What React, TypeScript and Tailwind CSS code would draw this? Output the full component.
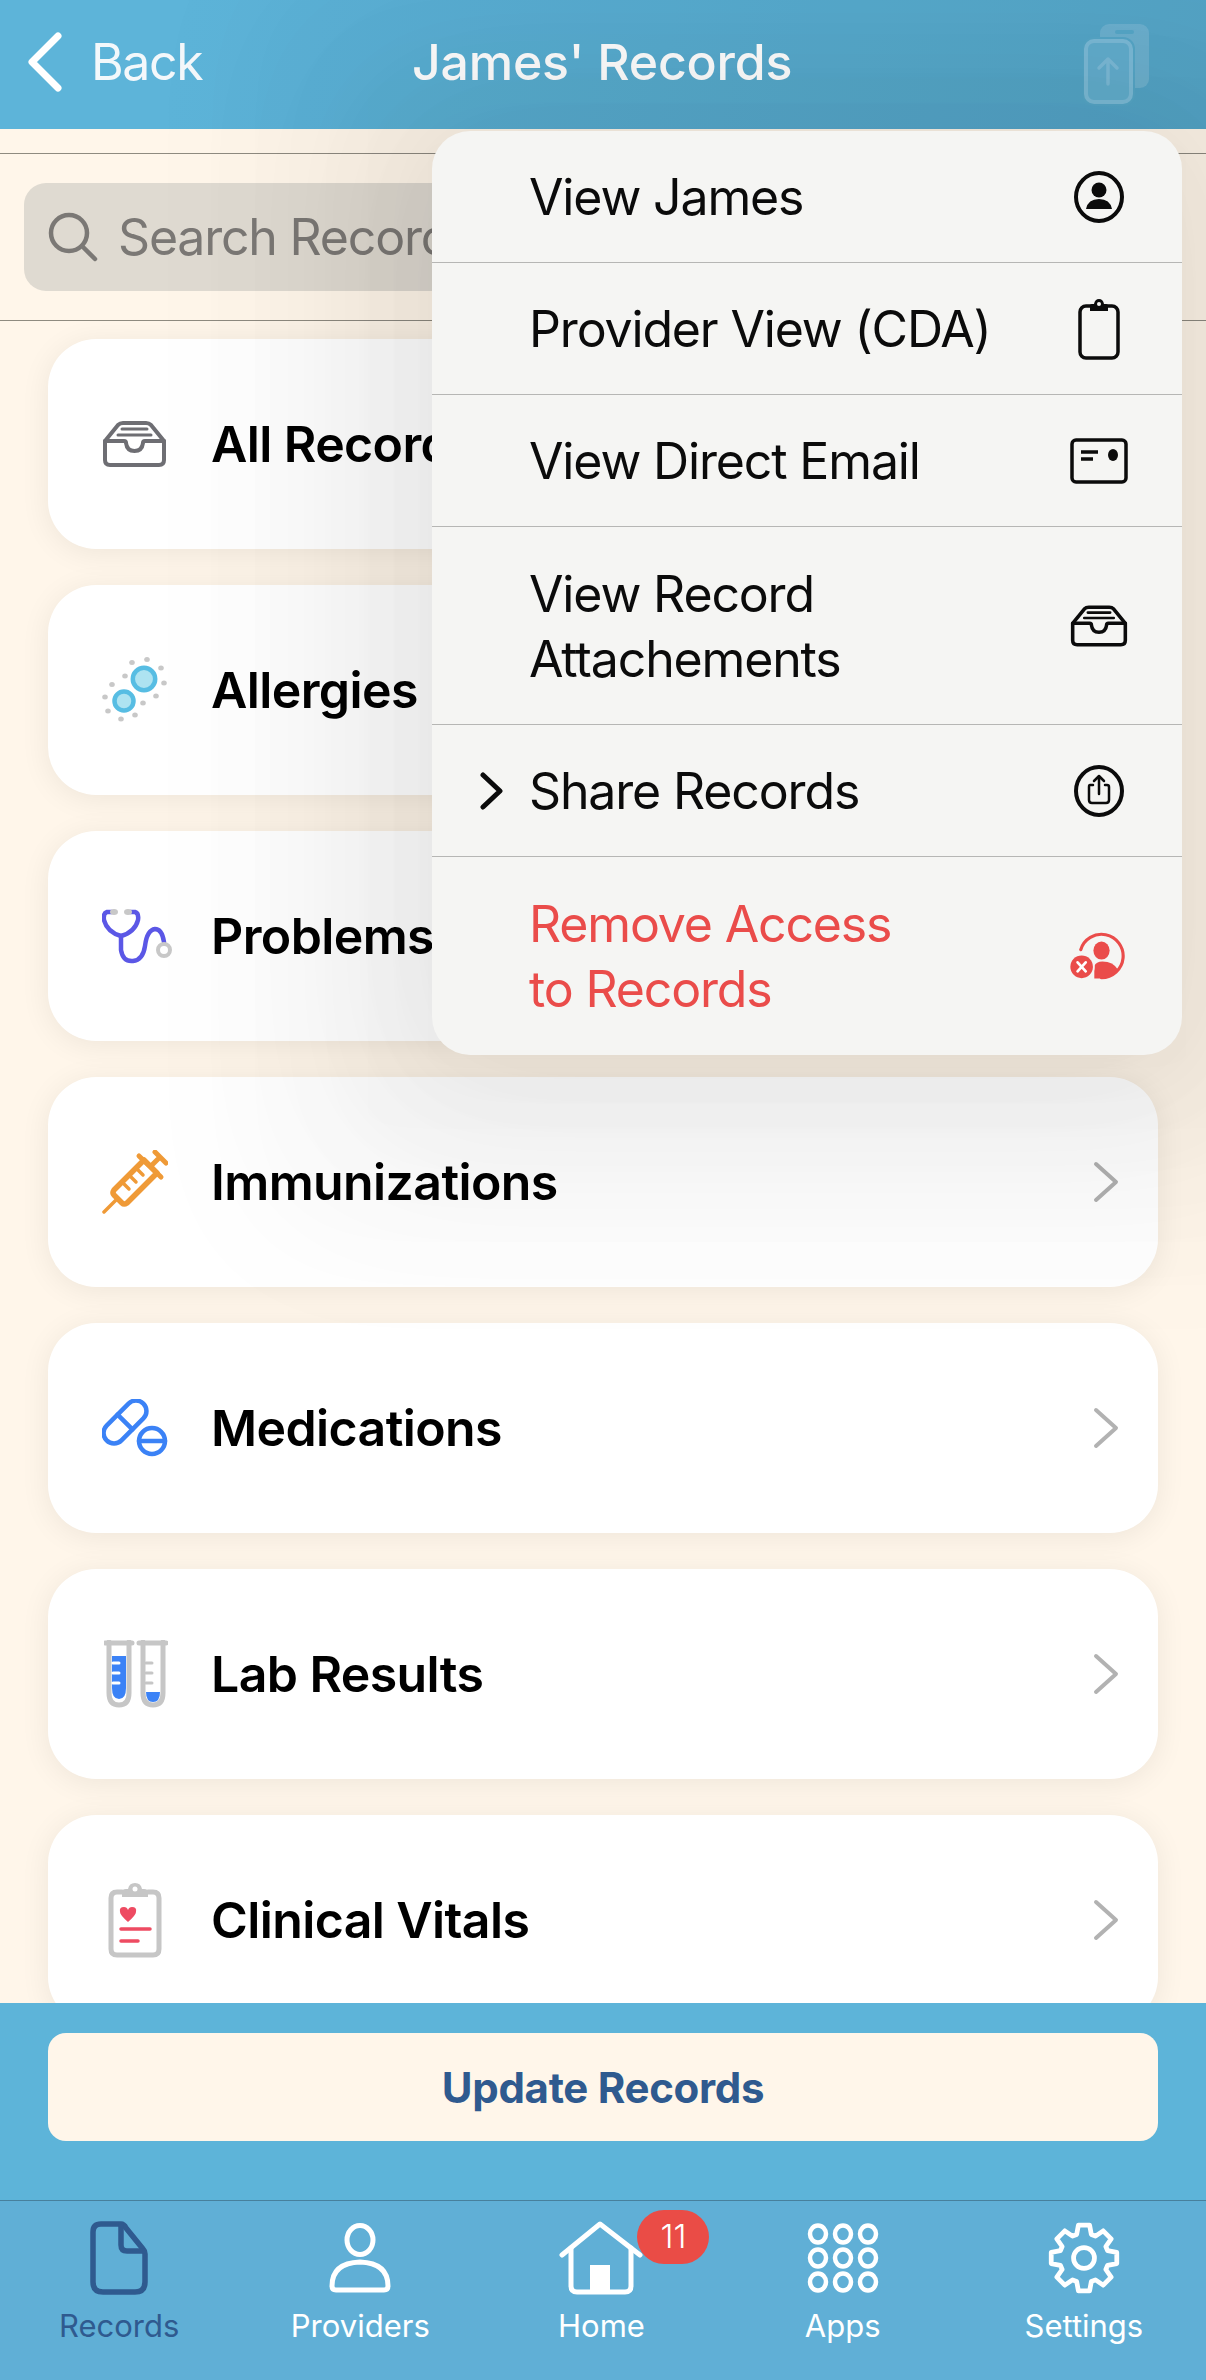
import React from "react";

const gearPath = (() => {
  const cx = 40, cy = 40, n = 8;
  const pts: string[] = [];
  for (let i = 0; i < n; i++) {
    const a = (i * 2 * Math.PI) / n - Math.PI / 2;
    const d = [[-0.30, 26], [-0.17, 35], [0.17, 35], [0.30, 26]];
    d.forEach(([o, r]) => {
      pts.push(`${(cx + r * Math.cos(a + o)).toFixed(1)},${(cy + r * Math.sin(a + o)).toFixed(1)}`);
    });
  }
  return pts;
})();

const Tray = ({ c, w = 65, h = 46 }: { c: string; w?: number; h?: number }) => (
  <svg width={w} height={h} viewBox="0 0 65 46" fill="none" stroke={c} strokeWidth="4" strokeLinejoin="round" strokeLinecap="round">
    <path d="M3 20 L16 4 Q18 2 21 2 H44 Q47 2 49 4 L62 20 V39 Q62 44 57 44 H8 Q3 44 3 39 Z" />
    <path d="M3 20 H22 Q24 20 24 22 Q25 30 32.5 30 Q40 30 41 22 Q41 20 43 20 H62" />
    <path d="M20 8 H45 M16 14 H49" strokeWidth="3" />
  </svg>
);

const ChevronGray = () => (
  <svg width="28" height="42" viewBox="0 0 28 42" fill="none" stroke="#b2b2b2" strokeWidth="4" strokeLinecap="round" strokeLinejoin="round">
    <path d="M4 3 L24 21 L4 39" />
  </svg>
);

const Allergy = () => (
  <svg width="66" height="66" viewBox="0 0 66 66">
    {[[30,5.6],[45,2.5],[59,11],[62,26],[54,39],[41,46],[23,19],[10,27.5],[3,40],[6,54],[19,62],[33,58]].map(([x, y], i) => (
      <ellipse key={i} cx={x} cy={y} rx="2.8" ry="2.5" fill="#c8c8c8" />
    ))}
    <circle cx="42" cy="22" r="11.2" fill="#aee3f1" stroke="#57bde3" strokeWidth="4.5" />
    <circle cx="22" cy="44" r="9.5" fill="#aee3f1" stroke="#57bde3" strokeWidth="4.5" />
  </svg>
);

const Stetho = () => (
  <svg width="70" height="56" viewBox="0 0 70 56" fill="none" strokeLinecap="round">
    <path d="M10 4 H5 Q1 5 2 12 Q5 24 19 28 Q33 24 36 12 Q37 5 33 4 H28" stroke="#5b57e6" strokeWidth="4.5" />
    <path d="M19 28 V42 Q21 54 31 53 Q41 52 43 38 Q45 22 53 21 Q60 21 62 34" stroke="#5b57e6" strokeWidth="4.5" />
    <ellipse cx="12" cy="4" rx="4" ry="3" fill="#c8c8c8" />
    <ellipse cx="26" cy="4" rx="4" ry="3" fill="#c8c8c8" />
    <circle cx="62" cy="42" r="6" fill="#fff" stroke="#c8c8c8" strokeWidth="4" />
  </svg>
);

const Syringe = () => (
  <svg width="66" height="64" viewBox="0 0 66 64" fill="none" stroke="#ef9a37" strokeLinecap="round" strokeLinejoin="round">
    <path d="M2 62 L14 50" strokeWidth="3.5" />
    <path d="M12 40 L42 10 L55 23 L25 53 Q22 55 20 53 L12 45 Q10 43 12 40 Z" strokeWidth="5.5" />
    <path d="M37 6 L59 27" strokeWidth="5" />
    <path d="M50 15 L58 7 M53 2 L64 13" strokeWidth="5" />
    <path d="M36 20 L41 25 M29 27 L34 32 M22 34 L27 39" strokeWidth="3.5" />
  </svg>
);

const Meds = () => (
  <svg width="66" height="58" viewBox="0 0 66 58" fill="none" stroke="#3b82f6" strokeWidth="4.5" strokeLinecap="round">
    <g transform="rotate(-45 23 23)">
      <rect x="-3" y="12.5" width="52" height="21" rx="10.5" />
      <path d="M23 12.5 V33.5" />
    </g>
    <circle cx="50" cy="42" r="13" fill="#fff" />
    <path d="M37 42 H63" />
  </svg>
);

const Lab = () => (
  <svg className="ml-[2px]" width="64" height="68" viewBox="0 0 64 68" fill="none" strokeLinecap="round">
    <path d="M8 16 H22 V48 Q22 59 15 59 Q8 59 8 48 Z" fill="#3b82f6" />
    <path d="M42 52 H56 Q56 62 49 62 Q42 62 42 52 Z" fill="#3b82f6" />
    <path d="M5 2 V53 Q5 65 15 65 Q25 65 25 53 V2" stroke="#c6c6c6" strokeWidth="5" />
    <path d="M39 2 V53 Q39 65 49 65 Q59 65 59 53 V2" stroke="#c6c6c6" strokeWidth="5" />
    <path d="M1 3 H28 M35 3 H62" stroke="#c6c6c6" strokeWidth="5" />
    <path d="M9 23 H15 M9 33 H15 M9 43 H15" stroke="#fff" strokeWidth="3" />
    <path d="M42 23 H48 M42 33 H48 M42 43 H48" stroke="#c6c6c6" strokeWidth="3" />
  </svg>
);

const Vitals = () => (
  <svg className="ml-[6px]" width="54" height="76" viewBox="0 0 54 76" fill="none" strokeLinecap="round">
    <path d="M14 10 H9 Q3 10 3 16 V67 Q3 73 9 73 H45 Q51 73 51 67 V16 Q51 10 45 10 H40" stroke="#c6c6c6" strokeWidth="5" />
    <path d="M14 15 V10 Q14 7 18 7 H20 Q21 1 27 1 Q33 1 34 7 H36 Q40 7 40 10 V15 Z" fill="#c6c6c6" />
    <circle cx="27" cy="7" r="2.5" fill="#fff" />
    <path d="M20 40 Q12 33 12 30 Q11 25 16 25 Q19 25 20 28 Q21 25 24 25 Q29 25 28 30 Q28 33 20 40 Z" fill="#ee4b62" />
    <path d="M13 47 H42 M13 59 H30" stroke="#ee4b62" strokeWidth="3.5" />
  </svg>
);

const UserCircle = () => (
  <svg width="50" height="52" viewBox="0 0 50 52" fill="none">
    <ellipse cx="25" cy="26" rx="23" ry="24" stroke="#0b0b0b" strokeWidth="4" />
    <circle cx="25" cy="19" r="7.5" fill="#0b0b0b" />
    <path d="M12 38 Q14 28 25 28 Q36 28 38 38 Z" fill="#0b0b0b" />
  </svg>
);

const Clip = () => (
  <svg width="42" height="62" viewBox="0 0 42 62" fill="none">
    <rect x="2" y="8" width="38" height="52" rx="6" stroke="#0b0b0b" strokeWidth="3.5" />
    <path d="M12 13 V8 Q12 6 14 6 H16 Q17 1 21 1 Q25 1 26 6 H28 Q30 6 30 8 V13 Z" fill="#0b0b0b" />
    <circle cx="21" cy="6" r="2" fill="#f5f5f3" />
  </svg>
);

const IdCard = () => (
  <svg width="58" height="46" viewBox="0 0 58 46" fill="none">
    <rect x="2" y="2" width="54" height="42" rx="4" stroke="#0b0b0b" strokeWidth="3.5" />
    <path d="M11 14 H28 M11 21 H23" stroke="#0b0b0b" strokeWidth="3.5" />
    <ellipse cx="43" cy="17" rx="5" ry="6" fill="#0b0b0b" />
  </svg>
);

const ShareCircle = () => (
  <svg width="50" height="52" viewBox="0 0 50 52" fill="none" stroke="#0b0b0b" strokeLinecap="round" strokeLinejoin="round">
    <ellipse cx="25" cy="26" rx="23" ry="24" strokeWidth="4" />
    <path d="M19 20 H16 Q15 20 15 22 V35 Q15 38 18 38 H32 Q35 38 35 35 V22 Q35 20 33 20 H31" strokeWidth="2.5" />
    <path d="M25 29 V11 M20 16 L25 11 L30 16" strokeWidth="2.5" />
  </svg>
);

const RemoveUser = () => (
  <svg className="mr-[4px]" width="62" height="54" viewBox="0 0 62 54" fill="none">
    <path d="M13 20 A24 24 0 1 1 36 51" stroke="#ea4c4a" strokeWidth="3.5" strokeLinecap="round" />
    <ellipse cx="36" cy="21" rx="9" ry="10" fill="#ea4c4a" />
    <path d="M28 52 V38 Q30 33 37 33 Q49 33 54 42 Q46 51 35 52 Z" fill="#ea4c4a" />
    <circle cx="14" cy="39" r="14.5" fill="#f5f5f3" />
    <circle cx="14" cy="39" r="12.5" fill="#ea4c4a" />
    <path d="M9.5 34 L18.5 44 M18.5 34 L9.5 44" stroke="#fff" strokeWidth="3" strokeLinecap="round" />
  </svg>
);

const MenuRow = ({ children, icon, chevron, tall, red, last }: { children: React.ReactNode; icon: React.ReactNode; chevron?: boolean; tall?: boolean; red?: boolean; last?: boolean }) => (
  <div className={`flex items-center pl-[48px] pr-[53px] ${tall ? "h-[198px]" : "h-[132px]"} ${last ? "" : "border-b border-[#b6b6b4]"}`}>
    <div className="w-[49px] shrink-0">
      {chevron && (
        <svg width="24" height="38" viewBox="0 0 24 38" fill="none" stroke="#0b0b0b" strokeWidth="5" strokeLinecap="round" strokeLinejoin="round">
          <path d="M3 3 L20 19 L3 35" />
        </svg>
      )}
    </div>
    <div className={`flex-1 mt-[2px] text-[50px] leading-[65px] tracking-[-1.15px] ${red ? "text-[#ea4c4a]" : "text-[#0b0b0b]"}`}>{children}</div>
    <div className="w-[60px] flex justify-center shrink-0">{icon}</div>
  </div>
);

const Card = ({ label, icon }: { label: string; icon: React.ReactNode }) => (
  <div className="h-[210px] shrink-0 rounded-[48px] bg-white shadow-[0_4px_30px_rgba(0,0,0,0.07)] flex items-center pl-[54px] pr-[38px]">
    <div className="w-[70px] flex justify-start shrink-0">{icon}</div>
    <div className="ml-[39px] flex-1 text-[50px] font-semibold text-black tracking-[-0.6px]">{label}</div>
    <ChevronGray />
  </div>
);

const Tab = ({ label, active, children }: { label: string; active?: boolean; children: React.ReactNode }) => (
  <div className="relative flex flex-col items-center pr-[3px]">
    <div className="h-[78px] mt-[18px] flex items-center justify-center">{children}</div>
    <div className={`mt-[11px] text-[31px] leading-[36px] ${active ? "text-[#2f5a8f]" : "text-white"}`}>{label}</div>
  </div>
);

export default function App() {
  return (
    <div className="relative w-[1206px] h-[2380px] overflow-hidden flex flex-col bg-[#fff6ea] font-['Inter',sans-serif]">
      <header className="h-[129px] shrink-0 bg-[linear-gradient(100deg,#5db4d9_15%,#55a5c8_100%)] flex items-center relative text-white">
        <svg className="ml-[27px] mt-[-5px]" width="36" height="60" viewBox="0 0 36 60" fill="none" stroke="#fff" strokeWidth="7" strokeLinecap="round" strokeLinejoin="round">
          <path d="M31 4 L5 30 L31 56" />
        </svg>
        <span className="ml-[28px] text-[50px] font-normal leading-none mt-[-6px] text-[#f3f8fb] tracking-[-1.4px]">Back</span>
        <span className="flex-1 text-center text-[50px] font-medium leading-none mt-[-6px] mr-[204px] tracking-[-0.2px]">James' Records</span>
        <svg className="absolute right-[53px] top-[22px]" width="70" height="84" viewBox="0 0 70 84" fill="none">
          <rect x="17" y="2" width="49" height="64" rx="9" fill="#ffffff" fillOpacity="0.14" />
          <rect x="32" y="8" width="19" height="4" rx="2" fill="#58a8ca" />
          <rect x="3" y="19" width="45" height="61" rx="8" stroke="#58a8ca" strokeWidth="8" />
          <rect x="3" y="19" width="45" height="61" rx="8" fill="#64afd0" stroke="#7cbcd9" strokeWidth="4" />
          <path d="M25 62 V37 M16 46 L25 37 L34 46" stroke="#7cbcd9" strokeWidth="3.5" strokeLinecap="round" strokeLinejoin="round" />
        </svg>
      </header>

      <main className="flex-1 min-h-0 overflow-hidden">
        <div className="mt-[24px] border-y border-[#8f8b80] h-[168px] flex items-center pl-[24px] pr-[48px]">
          <div className="w-full h-[108px] rounded-[22px] bg-[#dfdad1] flex items-center pl-[24px] gap-[20px]">
            <svg width="50" height="50" viewBox="0 0 50 50" fill="none" stroke="#7b7875" strokeWidth="4.5" strokeLinecap="round">
              <circle cx="21" cy="21" r="18" />
              <path d="M34 34 L47 47" />
            </svg>
            <span className="text-[50px] text-[#7b7875] tracking-[-1.2px]">Search Records</span>
          </div>
        </div>
        <div className="mt-[18px] mx-[48px] flex flex-col gap-[36px]">
          <Card label="All Records" icon={<Tray c="#6e6e73" />} />
          <Card label="Allergies" icon={<Allergy />} />
          <Card label="Problems" icon={<Stetho />} />
          <Card label="Immunizations" icon={<Syringe />} />
          <Card label="Medications" icon={<Meds />} />
          <Card label="Lab Results" icon={<Lab />} />
          <Card label="Clinical Vitals" icon={<Vitals />} />
        </div>
      </main>

      <section className="h-[197px] shrink-0 bg-[#5db4d9] pt-[30px] px-[48px] relative z-10">
        <div className="h-[108px] rounded-[18px] bg-[#fff6ea] flex items-center justify-center text-[42px] font-bold text-[#2f5a8f] tracking-[-0.3px]">
          Update Records
        </div>
      </section>

      <nav className="h-[180px] shrink-0 bg-[#60afd6] border-t border-[#47809c] grid grid-cols-5 relative z-10">
        <Tab label="Records" active>
          <svg width="58" height="74" viewBox="0 0 58 74" fill="none" stroke="#2f5a8f" strokeWidth="5.5" strokeLinejoin="round">
            <path d="M11 3 H31 Q34 3 36 7 L53 28 Q55 30 55 33 V61 Q55 71 45 71 H13 Q3 71 3 61 V11 Q3 3 11 3 Z" />
            <path d="M31 3 V24 Q31 30 37 30 H55" />
          </svg>
        </Tab>
        <Tab label="Providers">
          <svg width="62" height="70" viewBox="0 0 62 70" fill="none" stroke="#fff" strokeWidth="5" strokeLinejoin="round">
            <ellipse cx="31" cy="17" rx="13" ry="14.5" />
            <path d="M3 63 Q3 40 31 39 Q59 40 59 63 Q59 67 55 67 H7 Q3 67 3 63 Z" />
          </svg>
        </Tab>
        <Tab label="Home">
          <svg width="84" height="74" viewBox="0 0 84 74" fill="none" stroke="#fff" strokeWidth="5" strokeLinecap="round" strokeLinejoin="round">
            <path d="M3 34 L41 3 L81 34" />
            <path d="M12 27 V65 Q12 71 18 71 H66 Q72 71 72 65 V27" />
            <rect x="31" y="44" width="20" height="27" fill="#fff" stroke="none" />
          </svg>
          <div className="absolute left-[155px] top-[9px] w-[72px] h-[54px] rounded-full bg-[#ea4c46] flex items-center justify-center text-[33px] font-light text-white">11</div>
        </Tab>
        <Tab label="Apps">
          <svg width="72" height="70" viewBox="0 0 72 70" fill="none" stroke="#fff" strokeWidth="4.5">
            {[11, 35, 59].flatMap((y) =>
              [11, 36, 61].map((x) => <ellipse key={`${x}-${y}`} cx={x} cy={y} rx="8" ry="8.5" />)
            )}
          </svg>
        </Tab>
        <Tab label="Settings">
          <svg width="76" height="76" viewBox="0 0 80 80" fill="none" stroke="#fff" strokeWidth="5" strokeLinejoin="round">
            <polygon points={gearPath.join(" ")} />
            <circle cx="40" cy="40" r="11" />
          </svg>
        </Tab>
      </nav>

      <div className="absolute z-[5] left-[432px] top-[131px] w-[750px] rounded-[38px] bg-[#f5f5f3] shadow-[0_10px_130px_0_rgba(0,0,0,0.028),0_10px_130px_50px_rgba(0,0,0,0.026),0_10px_130px_100px_rgba(0,0,0,0.024),0_10px_130px_160px_rgba(0,0,0,0.02),0_10px_130px_220px_rgba(0,0,0,0.016)] overflow-hidden">
        <MenuRow icon={<UserCircle />}>View James</MenuRow>
        <MenuRow icon={<Clip />}>Provider View (CDA)</MenuRow>
        <MenuRow icon={<IdCard />}>View Direct Email</MenuRow>
        <MenuRow tall icon={<Tray c="#0b0b0b" w={58} h={44} />}>View Record<br />Attachements</MenuRow>
        <MenuRow chevron icon={<ShareCircle />}>Share Records</MenuRow>
        <MenuRow tall red last icon={<RemoveUser />}>Remove Access<br />to Records</MenuRow>
      </div>
    </div>
  );
}
